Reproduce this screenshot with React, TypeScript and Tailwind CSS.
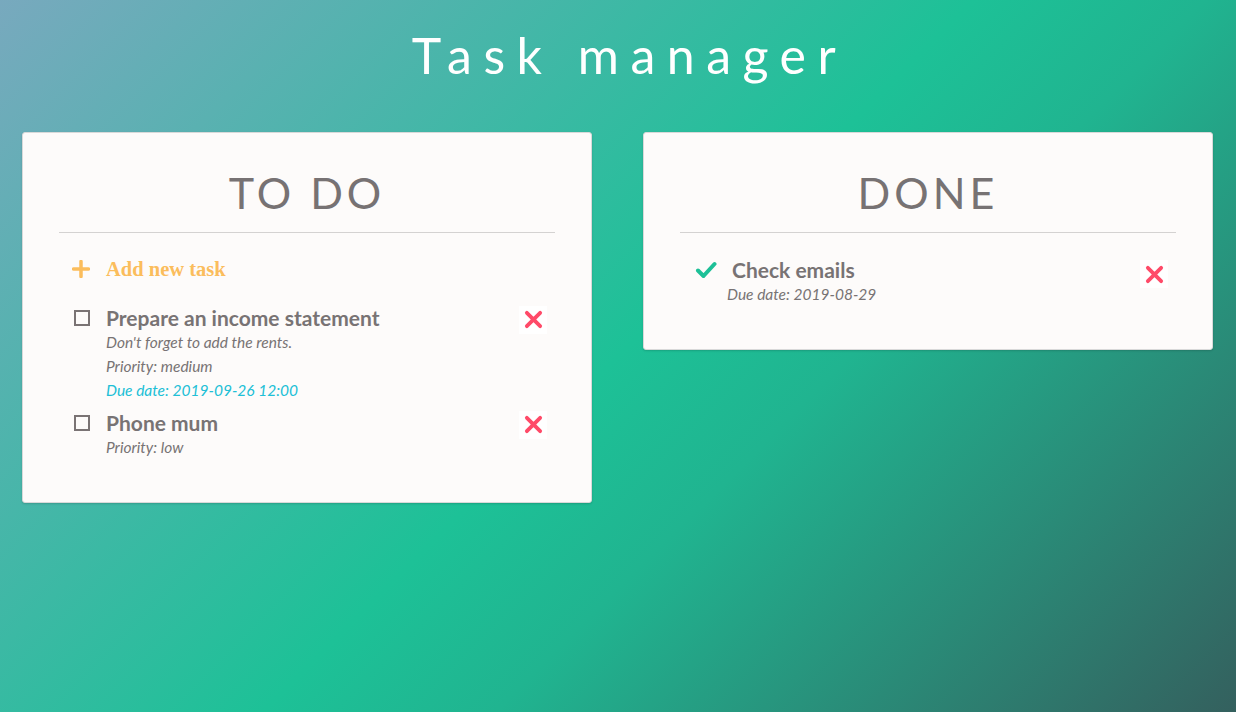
type Task = {
  title: string;
  description?: string;
  priority?: string;
  due?: string;
};

const todo: Task[] = [
  {
    title: "Prepare an income statement",
    description: "Don't forget to add the rents.",
    priority: "medium",
    due: "2019-09-26 12:00",
  },
  { title: "Phone mum", priority: "low" },
];

const done: Task[] = [{ title: "Check emails", due: "2019-08-29" }];

function DeleteButton() {
  return (
    <button className="w-7 h-7 bg-white flex items-center justify-center shrink-0">
      <svg viewBox="0 0 20 20" className="w-[19px] h-[19px] text-[#ff4a68]">
        <path d="M3 3 L17 17 M17 3 L3 17" stroke="currentColor" strokeWidth="4" strokeLinecap="round" />
      </svg>
    </button>
  );
}

function TodoItem({ task }: { task: Task }) {
  return (
    <li className="flex items-start pl-[15px] pr-2">
      <div className="w-4 h-4 border-2 border-[#7a7374] mt-[4px] shrink-0" />
      <div className="flex-1 pl-4">
        <div className="text-[21px] font-bold leading-6 text-[#787374]">{task.title}</div>
        {task.description && (
          <div className="italic text-[15.5px] leading-6 text-[#787374]">{task.description}</div>
        )}
        {task.priority && (
          <div className="italic text-[15.5px] leading-6 text-[#787374]">Priority: {task.priority}</div>
        )}
        {task.due && (
          <div className="italic text-[15.5px] leading-6 text-[#20bfd6]">Due date: {task.due}</div>
        )}
      </div>
      <DeleteButton />
    </li>
  );
}

function DoneItem({ task }: { task: Task }) {
  return (
    <li className="flex items-start pl-[15px] pr-2">
      <svg viewBox="0 0 22 22" className="w-[22px] h-[22px] text-[#1dc097] mt-[1px] shrink-0">
        <path d="M3 11.5 L8.5 17 L19.5 5" fill="none" stroke="currentColor" strokeWidth="4" strokeLinecap="round" strokeLinejoin="round" />
      </svg>
      <div className="flex-1 pl-[10px]">
        <div className="text-[21px] font-bold leading-6 text-[#787374] pl-[5px]">{task.title}</div>
        {task.due && (
          <div className="italic text-[15.5px] leading-6 text-[#787374]">Due date: {task.due}</div>
        )}
      </div>
      <div className="mt-[2px]">
        <DeleteButton />
      </div>
    </li>
  );
}

function Card({ title, children }: { title: string; children: React.ReactNode }) {
  return (
    <section className="w-[570px] bg-[#fdfbfa] border border-[#d9d9d9] rounded-[3px] shadow-[0_1px_2px_rgba(0,0,0,0.15)] px-9 pt-[30px] pb-[43px]">
      <h2 className="text-center text-[43px] leading-[60px] font-normal tracking-[4px] text-[#777273] pb-[9px] border-b border-[#d4d2d1]">
        {title}
      </h2>
      {children}
    </section>
  );
}

export default function App() {
  return (
    <div
      className="w-full h-[712px] px-[22px] pt-[22px] bg-[linear-gradient(135deg,#78a9be_0%,#1dc197_50%,#20b490_62%,#34605e_100%)]"
      style={{ fontFamily: "Lato, 'Open Sans', sans-serif" }}
    >
      <h1 className="text-center text-white text-[50px] font-normal tracking-[0.23em] pl-[23px] leading-[66px]">
        Task manager
      </h1>
      <div className="flex items-start gap-[51px] mt-[44px]">
        <Card title="TO DO">
          <button
            className="flex items-center mt-[21px] pl-[13px] text-[#fbbd5c] font-bold text-[20.5px]"
            style={{ fontFamily: "'Liberation Serif', serif" }}
          >
            <svg viewBox="0 0 18 18" className="w-[18px] h-[18px]">
              <path d="M9 1.5 V16.5 M1.5 9 H16.5" stroke="currentColor" strokeWidth="3.5" strokeLinecap="round" />
            </svg>
            <span className="pl-[16px]">Add new task</span>
          </button>
          <ul className="mt-[21px] flex flex-col gap-[9px]">
            {todo.map((t) => (
              <TodoItem key={t.title} task={t} />
            ))}
          </ul>
        </Card>
        <Card title="DONE">
          <ul className="mt-[25px]">
            {done.map((t) => (
              <DoneItem key={t.title} task={t} />
            ))}
          </ul>
        </Card>
      </div>
    </div>
  );
}
